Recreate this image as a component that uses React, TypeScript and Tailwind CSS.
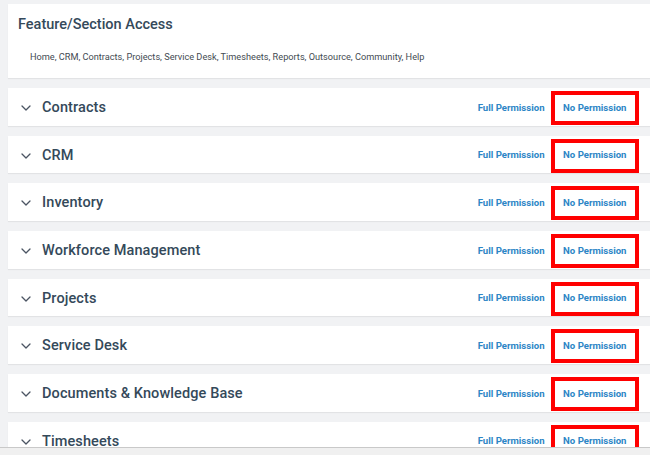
import React from "react";

const sections = [
  "Contracts",
  "CRM",
  "Inventory",
  "Workforce Management",
  "Projects",
  "Service Desk",
  "Documents & Knowledge Base",
  "Timesheets",
];

function Chevron() {
  return (
    <svg width="10" height="6" viewBox="0 0 10 6" className="shrink-0">
      <polyline
        points="1,1 5,5 9,1"
        fill="none"
        stroke="#4b5563"
        strokeWidth="1.3"
        strokeLinecap="round"
        strokeLinejoin="round"
      />
    </svg>
  );
}

function SectionRow({ name }: { name: string }) {
  return (
    <div className="flex h-[37.7px] shrink-0 items-center bg-white pl-[13px] pr-[11px] pt-[2px] shadow-[0_1px_1px_rgba(0,0,0,0.06)]">
      <Chevron />
      <span className="ml-[11px] text-[14.5px] font-medium tracking-[0.1px] text-[#34495a]">{name}</span>
      <div className="ml-auto flex items-center">
        <button className="text-[9.6px] font-bold text-[#2d86c6]">Full Permission</button>
        <button className="ml-[6px] flex h-[34px] items-center border-[4px] border-[#ff0000] px-[8.5px] text-[9.6px] font-bold text-[#2d86c6]">
          No Permission
        </button>
      </div>
    </div>
  );
}

export default function App() {
  return (
    <div
      className="flex h-[455px] w-[650px] flex-col overflow-hidden bg-[#f1f2f4]"
      style={{ fontFamily: "Roboto, 'Noto Sans', sans-serif" }}
    >
      <div className="flex min-h-0 flex-1 flex-col gap-[10px] overflow-hidden pl-[8px] pt-[4px]">
        <div className="flex h-[74px] shrink-0 flex-col bg-white pl-[10px] shadow-[0_1px_1px_rgba(0,0,0,0.06)]">
          <h2 className="mt-[12px] text-[14.5px] font-medium leading-[18px] text-[#34495a]">
            Feature/Section Access
          </h2>
          <p className="mt-[17px] pl-[12px] text-[9.2px] leading-[12px] text-[#444b52]">
            Home, CRM, Contracts, Projects, Service Desk, Timesheets, Reports, Outsource, Community, Help
          </p>
        </div>
        {sections.map((s) => (
          <SectionRow key={s} name={s} />
        ))}
      </div>
      <div className="h-[8px] shrink-0 border-t border-[#c9c9c9] bg-[#f0f0f0]" />
    </div>
  );
}
